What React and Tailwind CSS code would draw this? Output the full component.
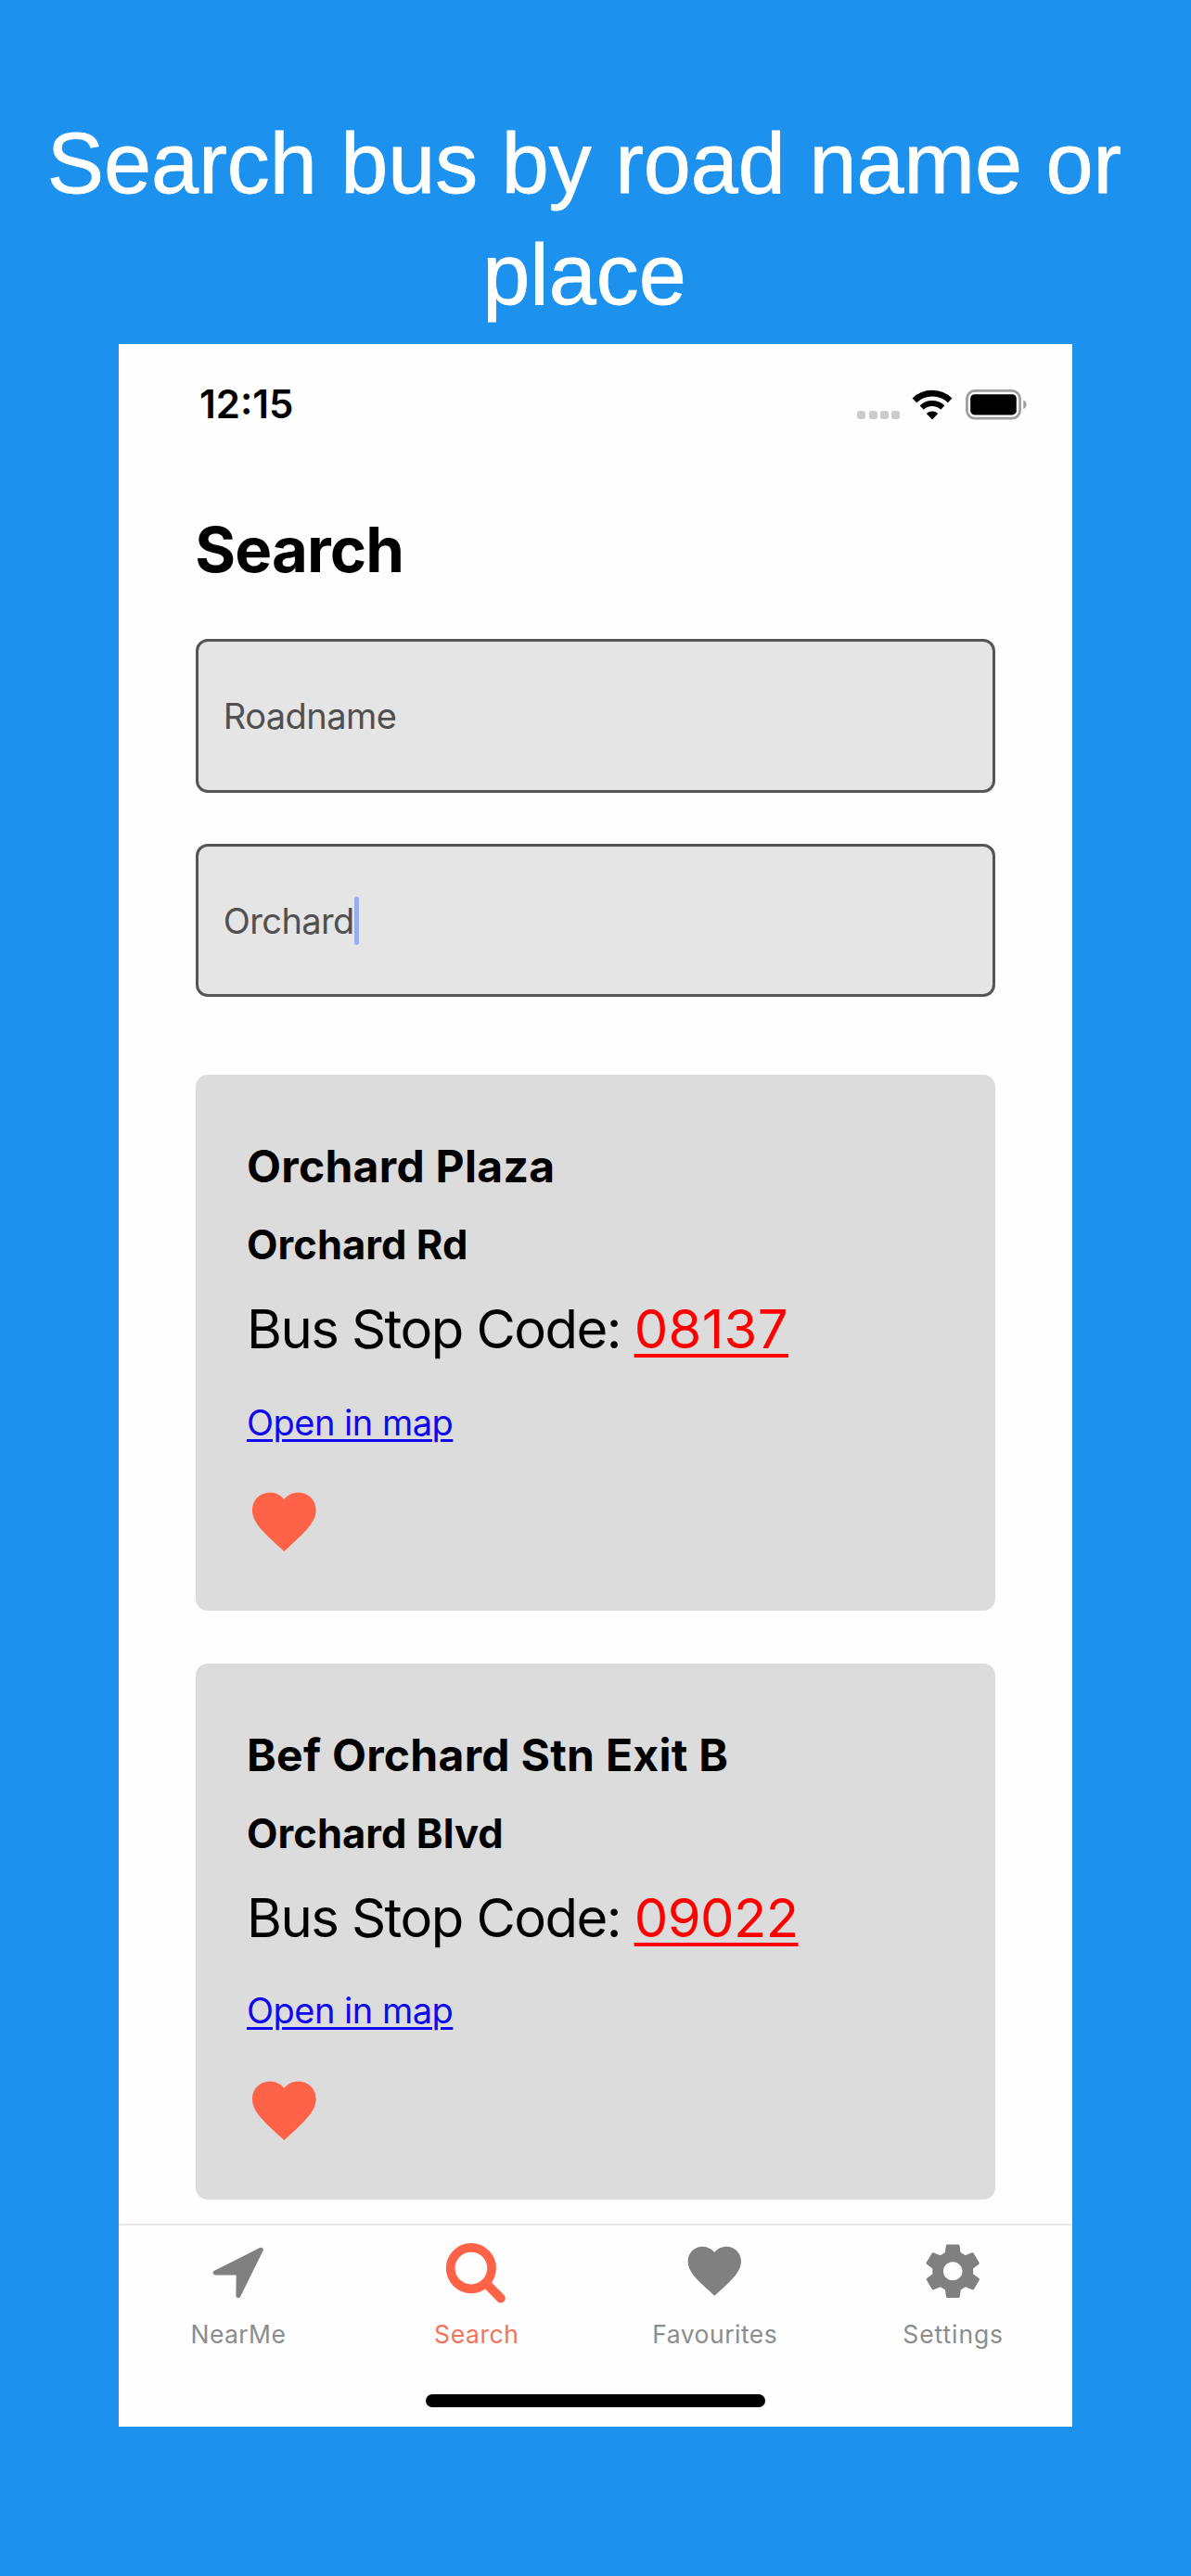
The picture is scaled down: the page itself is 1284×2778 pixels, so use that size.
import { IoMdHeart, IoMdSettings } from 'react-icons/io';

const STOPS = [
  { name: 'Orchard Plaza', road: 'Orchard Rd', code: '08137', codeClass: 'tracking-[0.3px]' },
  { name: 'Bef Orchard Stn Exit B', road: 'Orchard Blvd', code: '09022', codeClass: 'tracking-[-0.6px]' },
];

function NavigateIcon({ className }) {
  return (
    <svg viewBox="0 0 70.6 70.6" className={className} fill="currentColor" stroke="currentColor" strokeWidth="5" strokeLinejoin="round">
      <path d="M60.3 12.2 11.2 37H36.2L35.9 61.7Z" />
    </svg>
  );
}

function SearchIcon({ className }) {
  return (
    <svg viewBox="0 0 70.6 70.6" className={className} fill="none" stroke="currentColor" strokeLinecap="round">
      <circle cx="29.9" cy="32.1" r="22.2" strokeWidth="9.7" />
      <path d="M46 48.4 61.9 64.5" strokeWidth="9.8" />
    </svg>
  );
}

function StatusBar() {
  return (
    <div className="flex h-[50px] items-center justify-between pl-[87px] pr-[48.5px]">
      <span className="text-[42px] leading-[50px] font-semibold">12:15</span>
      <div className="flex items-center">
        <div className="mt-[23px] mr-[13px] flex gap-[3.5px]">
          {[0, 1, 2, 3].map((dot) => (
            <span key={dot} className="size-[8.8px] rounded-[3px] bg-[#cbcbcb]" />
          ))}
        </div>
        <svg viewBox="0 0 44 33" className="mr-[14px] h-[33px] w-[44px]">
          <g fill="none" stroke="#000">
            <path d="M2.9 11.8A27.5 27.5 0 0 1 41.1 11.8" strokeWidth="6.6" />
            <path d="M10.7 19.6A16.4 16.4 0 0 1 33.3 19.6" strokeWidth="6" />
          </g>
          <path d="M22 32.5 15.8 26A9.2 9.2 0 0 1 28.2 26Z" />
        </svg>
        <svg viewBox="0 0 66 33" className="h-[33px] w-[66px]">
          <rect x="1.4" y="1.4" width="57.2" height="29.8" rx="8.6" fill="none" stroke="#9e9e9e" strokeWidth="2.8" />
          <rect x="5.2" y="5.2" width="49.6" height="22.2" rx="4.4" fill="#000" />
          <path d="M62.3 11.4c2 .8 3.3 2.7 3.3 4.9s-1.3 4.1-3.3 4.9Z" fill="#9e9e9e" />
        </svg>
      </div>
    </div>
  );
}

function Field({ value, className, focused }) {
  return (
    <div className="flex h-[165.4px] items-center rounded-[13px] border-3 border-[#555555] bg-[#e5e5e5] pt-px pl-[26.5px] text-[38px] text-[#505050]">
      <span className={className}>{value}</span>
      {focused && <span className="h-[51.4px] w-[5.3px] rounded-full bg-[#9aacf0]" />}
    </div>
  );
}

function StopCard({ stop }) {
  return (
    <article className="h-[578px] rounded-[13px] bg-[#dcdcdc] pt-[69.5px] pl-[54.7px]">
      <h2 className="text-[48px] leading-[60px] font-bold tracking-[0.28px]">{stop.name}</h2>
      <h3 className="mt-[23.6px] text-[43.5px] leading-[60px] font-bold tracking-[0.05px]">{stop.road}</h3>
      <p className="mt-[21px] text-[58px] leading-[80px] tracking-[-1.55px] whitespace-pre">
        {'Bus Stop Code: '}
        <a className={`${stop.codeClass} text-[#ff0000] underline decoration-[3.5px] underline-offset-[5.5px]`}>{stop.code}</a>
      </p>
      <a className="mt-[35.6px] block w-fit text-[38px] leading-[50px] tracking-[-0.5px] text-[#1008ee] underline decoration-[3px] underline-offset-[3.5px]">
        Open in map
      </a>
      <IoMdHeart className="mt-[40.3px] -ml-[1.8px] size-[84.6px] text-[#ff6347]" />
    </article>
  );
}

function Tab({ icon: Icon, label, labelClass, active }) {
  return (
    <div className={`flex flex-1 flex-col items-center ${active ? 'text-[#ff6347]' : 'text-[#808080]'}`}>
      <Icon className="size-[70.6px]" />
      <span className={`mt-4 pl-px text-[26.5px] leading-8 ${labelClass} ${active ? 'text-[#f5725c]' : 'text-[#8c8c8d]'}`}>{label}</span>
    </div>
  );
}

export default function App() {
  return (
    <div className="flex h-[2778px] w-[1284px] flex-col bg-[#1c92ee]">
      <header className="h-[371px] pt-[116px] pr-[24px] text-center font-['Liberation_Sans',Arial,sans-serif] text-[91.8px] leading-[120px] text-white [-webkit-text-stroke:0.8px_white]">
        Search bus by road name or
        <br />
        place
      </header>
      <main className="ml-[128px] flex h-[2245.6px] w-[1027.6px] flex-col bg-[#fefefe] pt-[40.4px] font-[Inter,sans-serif] text-black">
        <StatusBar />
        <section className="mt-[91.3px] pr-[82.6px] pl-[83.3px]">
          <h1 className="-ml-px text-[67px] leading-[80px] font-bold tracking-[-0.9px]">Search</h1>
          <div className="mt-[56.6px] flex flex-col gap-[55.3px]">
            <Field value="Roadname" className="tracking-[-0.53px]" />
            <Field value="Orchard" className="tracking-[-0.6px]" focused />
          </div>
          <div className="mt-[83.6px] flex flex-col gap-[56.6px]">
            {STOPS.map((stop) => (
              <StopCard key={stop.code} stop={stop} />
            ))}
          </div>
        </section>
        <nav className="mt-auto flex h-[218.2px] flex-col border-t-2 border-[#e6e6e6] pt-[14px]">
          <div className="flex">
            <Tab icon={NavigateIcon} label="NearMe" labelClass="tracking-[0.4px]" />
            <Tab icon={SearchIcon} label="Search" labelClass="tracking-[0.6px]" active />
            <Tab icon={IoMdHeart} label="Favourites" labelClass="tracking-[0.5px]" />
            <Tab icon={IoMdSettings} label="Settings" labelClass="tracking-[0.9px]" />
          </div>
          <div className="mt-auto mb-[20.8px] h-[13.6px] w-[366.6px] self-center rounded-full bg-black" />
        </nav>
      </main>
    </div>
  );
}
